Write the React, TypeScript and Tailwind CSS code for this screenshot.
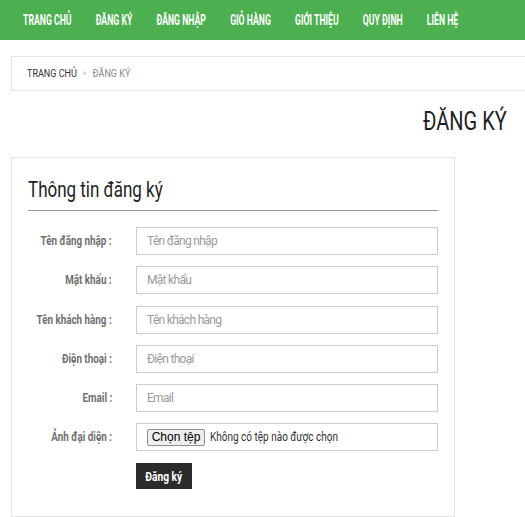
const navItems = [
  "TRANG CHỦ",
  "ĐĂNG KÝ",
  "ĐĂNG NHẬP",
  "GIỎ HÀNG",
  "GIỚI THIỆU",
  "QUY ĐỊNH",
  "LIÊN HỆ",
];

const fields = [
  { label: "Tên đăng nhập :", placeholder: "Tên đăng nhập" },
  { label: "Mật khẩu :", placeholder: "Mật khẩu" },
  { label: "Tên khách hàng :", placeholder: "Tên khách hàng" },
  { label: "Điện thoại :", placeholder: "Điện thoại" },
  { label: "Email :", placeholder: "Email" },
];

function Label({ children }: { children: React.ReactNode }) {
  return (
    <label className="w-[84px] shrink-0 flex justify-end whitespace-nowrap">
      <span className="inline-block origin-right scale-x-[0.82] text-[12px] font-bold text-[#707070]">
        {children}
      </span>
    </label>
  );
}

export default function App() {
  return (
    <div className="w-[525px] h-[517px] overflow-hidden bg-white font-['Roboto','Liberation_Sans',sans-serif]">
      <nav className="h-10 bg-[#4caf50] flex items-center pl-[23px]">
        <ul className="flex gap-[39px] origin-left scale-x-[0.62] whitespace-nowrap">
          {navItems.map((item) => (
            <li key={item}>
              <a href="#" className="text-white font-bold text-[14px]">
                {item}
              </a>
            </li>
          ))}
        </ul>
      </nav>

      <div className="mt-4 ml-[11px] w-[530px] h-[35px] border border-[#e5e5e5] flex items-center pl-[15px]">
        <div className="flex items-center origin-left scale-x-[0.86] text-[10.5px] whitespace-nowrap">
          <span className="text-[#333]">TRANG CHỦ</span>
          <span className="text-[#aaa] mx-[7px] text-[9px]">»</span>
          <span className="text-[#888]">ĐĂNG KÝ</span>
        </div>
      </div>

      <div className="mt-[15px] pr-[18px] flex justify-end">
        <h1 className="origin-right scale-x-[0.77] text-[26px] leading-[30px] text-[#222] whitespace-nowrap">
          ĐĂNG KÝ
        </h1>
      </div>

      <div className="mt-[21px] ml-[11px] w-[444px] border border-[#e5e5e5] px-[16px] pt-[18px] pb-[27px]">
        <div className="pb-[6px] border-b border-[#999]">
          <h2 className="origin-left scale-x-[0.79] text-[21.5px] leading-[28px] text-[#222] whitespace-nowrap">
            Thông tin đăng ký
          </h2>
        </div>

        <form className="mt-4 flex flex-col gap-[11.3px]">
          {fields.map((f) => (
            <div key={f.label} className="flex items-center">
              <Label>{f.label}</Label>
              <input
                placeholder={f.placeholder}
                className="ml-[24px] w-[302px] h-[28px] border border-[#ccc] px-[10px] text-[12px] tracking-[-0.7px] text-[#333] placeholder:text-[#9a9a9a] outline-none"
              />
            </div>
          ))}

          <div className="flex items-center">
            <Label>Ảnh đại diện :</Label>
            <div className="ml-[24px] w-[302px] h-[28px] border border-[#ccc] flex items-center pl-[10px]">
              <button
                type="button"
                className="h-[17px] w-[58px] shrink-0 border border-[#8f8f8f] rounded-[2px] bg-[#efefef] text-[12px] leading-none text-black font-['Liberation_Sans',sans-serif] whitespace-nowrap"
              >
                Chọn tệp
              </button>
              <span className="ml-[5px] inline-block origin-left scale-x-[0.8] text-[12.5px] text-[#333] whitespace-nowrap">
                Không có tệp nào được chọn
              </span>
            </div>
          </div>

          <div className="flex">
            <button
              type="button"
              className="ml-[108px] w-[56px] h-[26px] bg-[#2b2b2b] text-white"
            >
              <span className="inline-block scale-x-[0.85] text-[12px] font-bold whitespace-nowrap">
                Đăng ký
              </span>
            </button>
          </div>
        </form>
      </div>
    </div>
  );
}
